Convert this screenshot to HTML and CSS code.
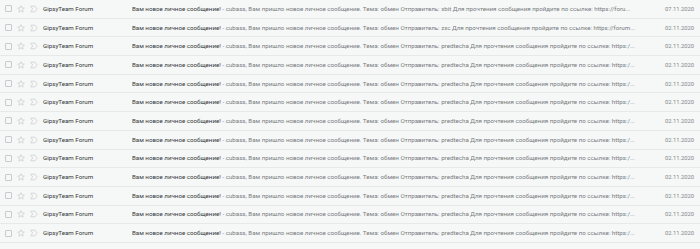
FILE: index.html
```html
<!DOCTYPE html>
<html lang="ru">
<head>
<meta charset="utf-8">
<link rel="stylesheet" href="styles.css">
</head>
<body>
<div class="list">
  <div class="row">
    <span class="icons"><span class="cb"></span><svg class="star" viewBox="0 0 10 10"><path d="M5 .8l1.2 2.8 3 .3-2.3 2 .7 3L5 7.3 2.4 8.9l.7-3-2.3-2 3-.3z"/></svg><svg class="imp" viewBox="0 0 10 10"><path d="M1 1.5h5.2L9 5 6.2 8.5H1L3.3 5z"/></svg></span>
    <span class="from">GipsyTeam Forum</span>
    <span class="text"><span class="subj">Вам новое личное сообщение!</span><span class="snip"> - cubass, Вам пришло новое личное сообщение. Тема: обмен Отправитель: xbit Для прочтения сообщения пройдите по ссылке: https://foru...</span></span>
    <span class="date">07.11.2020</span>
  </div>
  <div class="row">
    <span class="icons"><span class="cb"></span><svg class="star" viewBox="0 0 10 10"><path d="M5 .8l1.2 2.8 3 .3-2.3 2 .7 3L5 7.3 2.4 8.9l.7-3-2.3-2 3-.3z"/></svg><svg class="imp" viewBox="0 0 10 10"><path d="M1 1.5h5.2L9 5 6.2 8.5H1L3.3 5z"/></svg></span>
    <span class="from">GipsyTeam Forum</span>
    <span class="text"><span class="subj">Вам новое личное сообщение!</span><span class="snip"> - cubass, Вам пришло новое личное сообщение. Тема: обмен Отправитель: zxc Для прочтения сообщения пройдите по ссылке: https://forum...</span></span>
    <span class="date">02.11.2020</span>
  </div>
  <div class="row">
    <span class="icons"><span class="cb"></span><svg class="star" viewBox="0 0 10 10"><path d="M5 .8l1.2 2.8 3 .3-2.3 2 .7 3L5 7.3 2.4 8.9l.7-3-2.3-2 3-.3z"/></svg><svg class="imp" viewBox="0 0 10 10"><path d="M1 1.5h5.2L9 5 6.2 8.5H1L3.3 5z"/></svg></span>
    <span class="from">GipsyTeam Forum</span>
    <span class="text"><span class="subj">Вам новое личное сообщение!</span><span class="snip"> - cubass, Вам пришло новое личное сообщение. Тема: обмен Отправитель: predtecha Для прочтения сообщения пройдите по ссылке: https:/...</span></span>
    <span class="date">02.11.2020</span>
  </div>
  <div class="row">
    <span class="icons"><span class="cb"></span><svg class="star" viewBox="0 0 10 10"><path d="M5 .8l1.2 2.8 3 .3-2.3 2 .7 3L5 7.3 2.4 8.9l.7-3-2.3-2 3-.3z"/></svg><svg class="imp" viewBox="0 0 10 10"><path d="M1 1.5h5.2L9 5 6.2 8.5H1L3.3 5z"/></svg></span>
    <span class="from">GipsyTeam Forum</span>
    <span class="text"><span class="subj">Вам новое личное сообщение!</span><span class="snip"> - cubass, Вам пришло новое личное сообщение. Тема: обмен Отправитель: predtecha Для прочтения сообщения пройдите по ссылке: https:/...</span></span>
    <span class="date">02.11.2020</span>
  </div>
  <div class="row">
    <span class="icons"><span class="cb"></span><svg class="star" viewBox="0 0 10 10"><path d="M5 .8l1.2 2.8 3 .3-2.3 2 .7 3L5 7.3 2.4 8.9l.7-3-2.3-2 3-.3z"/></svg><svg class="imp" viewBox="0 0 10 10"><path d="M1 1.5h5.2L9 5 6.2 8.5H1L3.3 5z"/></svg></span>
    <span class="from">GipsyTeam Forum</span>
    <span class="text"><span class="subj">Вам новое личное сообщение!</span><span class="snip"> - cubass, Вам пришло новое личное сообщение. Тема: обмен Отправитель: predtecha Для прочтения сообщения пройдите по ссылке: https:/...</span></span>
    <span class="date">02.11.2020</span>
  </div>
  <div class="row">
    <span class="icons"><span class="cb"></span><svg class="star" viewBox="0 0 10 10"><path d="M5 .8l1.2 2.8 3 .3-2.3 2 .7 3L5 7.3 2.4 8.9l.7-3-2.3-2 3-.3z"/></svg><svg class="imp" viewBox="0 0 10 10"><path d="M1 1.5h5.2L9 5 6.2 8.5H1L3.3 5z"/></svg></span>
    <span class="from">GipsyTeam Forum</span>
    <span class="text"><span class="subj">Вам новое личное сообщение!</span><span class="snip"> - cubass, Вам пришло новое личное сообщение. Тема: обмен Отправитель: predtecha Для прочтения сообщения пройдите по ссылке: https:/...</span></span>
    <span class="date">02.11.2020</span>
  </div>
  <div class="row">
    <span class="icons"><span class="cb"></span><svg class="star" viewBox="0 0 10 10"><path d="M5 .8l1.2 2.8 3 .3-2.3 2 .7 3L5 7.3 2.4 8.9l.7-3-2.3-2 3-.3z"/></svg><svg class="imp" viewBox="0 0 10 10"><path d="M1 1.5h5.2L9 5 6.2 8.5H1L3.3 5z"/></svg></span>
    <span class="from">GipsyTeam Forum</span>
    <span class="text"><span class="subj">Вам новое личное сообщение!</span><span class="snip"> - cubass, Вам пришло новое личное сообщение. Тема: обмен Отправитель: predtecha Для прочтения сообщения пройдите по ссылке: https:/...</span></span>
    <span class="date">02.11.2020</span>
  </div>
  <div class="row">
    <span class="icons"><span class="cb"></span><svg class="star" viewBox="0 0 10 10"><path d="M5 .8l1.2 2.8 3 .3-2.3 2 .7 3L5 7.3 2.4 8.9l.7-3-2.3-2 3-.3z"/></svg><svg class="imp" viewBox="0 0 10 10"><path d="M1 1.5h5.2L9 5 6.2 8.5H1L3.3 5z"/></svg></span>
    <span class="from">GipsyTeam Forum</span>
    <span class="text"><span class="subj">Вам новое личное сообщение!</span><span class="snip"> - cubass, Вам пришло новое личное сообщение. Тема: обмен Отправитель: predtecha Для прочтения сообщения пройдите по ссылке: https:/...</span></span>
    <span class="date">02.11.2020</span>
  </div>
  <div class="row">
    <span class="icons"><span class="cb"></span><svg class="star" viewBox="0 0 10 10"><path d="M5 .8l1.2 2.8 3 .3-2.3 2 .7 3L5 7.3 2.4 8.9l.7-3-2.3-2 3-.3z"/></svg><svg class="imp" viewBox="0 0 10 10"><path d="M1 1.5h5.2L9 5 6.2 8.5H1L3.3 5z"/></svg></span>
    <span class="from">GipsyTeam Forum</span>
    <span class="text"><span class="subj">Вам новое личное сообщение!</span><span class="snip"> - cubass, Вам пришло новое личное сообщение. Тема: обмен Отправитель: predtecha Для прочтения сообщения пройдите по ссылке: https:/...</span></span>
    <span class="date">02.11.2020</span>
  </div>
  <div class="row">
    <span class="icons"><span class="cb"></span><svg class="star" viewBox="0 0 10 10"><path d="M5 .8l1.2 2.8 3 .3-2.3 2 .7 3L5 7.3 2.4 8.9l.7-3-2.3-2 3-.3z"/></svg><svg class="imp" viewBox="0 0 10 10"><path d="M1 1.5h5.2L9 5 6.2 8.5H1L3.3 5z"/></svg></span>
    <span class="from">GipsyTeam Forum</span>
    <span class="text"><span class="subj">Вам новое личное сообщение!</span><span class="snip"> - cubass, Вам пришло новое личное сообщение. Тема: обмен Отправитель: predtecha Для прочтения сообщения пройдите по ссылке: https:/...</span></span>
    <span class="date">02.11.2020</span>
  </div>
  <div class="row">
    <span class="icons"><span class="cb"></span><svg class="star" viewBox="0 0 10 10"><path d="M5 .8l1.2 2.8 3 .3-2.3 2 .7 3L5 7.3 2.4 8.9l.7-3-2.3-2 3-.3z"/></svg><svg class="imp" viewBox="0 0 10 10"><path d="M1 1.5h5.2L9 5 6.2 8.5H1L3.3 5z"/></svg></span>
    <span class="from">GipsyTeam Forum</span>
    <span class="text"><span class="subj">Вам новое личное сообщение!</span><span class="snip"> - cubass, Вам пришло новое личное сообщение. Тема: обмен Отправитель: predtecha Для прочтения сообщения пройдите по ссылке: https:/...</span></span>
    <span class="date">02.11.2020</span>
  </div>
  <div class="row">
    <span class="icons"><span class="cb"></span><svg class="star" viewBox="0 0 10 10"><path d="M5 .8l1.2 2.8 3 .3-2.3 2 .7 3L5 7.3 2.4 8.9l.7-3-2.3-2 3-.3z"/></svg><svg class="imp" viewBox="0 0 10 10"><path d="M1 1.5h5.2L9 5 6.2 8.5H1L3.3 5z"/></svg></span>
    <span class="from">GipsyTeam Forum</span>
    <span class="text"><span class="subj">Вам новое личное сообщение!</span><span class="snip"> - cubass, Вам пришло новое личное сообщение. Тема: обмен Отправитель: predtecha Для прочтения сообщения пройдите по ссылке: https:/...</span></span>
    <span class="date">02.11.2020</span>
  </div>
  <div class="row">
    <span class="icons"><span class="cb"></span><svg class="star" viewBox="0 0 10 10"><path d="M5 .8l1.2 2.8 3 .3-2.3 2 .7 3L5 7.3 2.4 8.9l.7-3-2.3-2 3-.3z"/></svg><svg class="imp" viewBox="0 0 10 10"><path d="M1 1.5h5.2L9 5 6.2 8.5H1L3.3 5z"/></svg></span>
    <span class="from">GipsyTeam Forum</span>
    <span class="text"><span class="subj">Вам новое личное сообщение!</span><span class="snip"> - cubass, Вам пришло новое личное сообщение. Тема: обмен Отправитель: predtecha Для прочтения сообщения пройдите по ссылке: https:/...</span></span>
    <span class="date">02.11.2020</span>
  </div>
</div>
</body>
</html>
```
FILE: styles.css
```css
html, body {
  margin: 0;
  padding: 0;
  background: #f6f7f7;
}
body {
  width: 700px;
  height: 249px;
  overflow: hidden;
  font-family: Roboto, "Liberation Sans", sans-serif;
}
.list {
  display: flex;
  flex-direction: column;
}
.row {
  height: 18.7px;
  box-sizing: border-box;
  border-bottom: 1px solid #e6e8ea;
  display: flex;
  align-items: center;
  background: #f6f7f7;
  font-size: 6.2px;
  white-space: nowrap;
}
.icons {
  display: flex;
  align-items: center;
  width: 43px;
  flex: none;
  padding-left: 5px;
  box-sizing: border-box;
}
.cb {
  width: 7px;
  height: 7px;
  box-sizing: border-box;
  border: 1px solid #c8cbcd;
  border-radius: 1px;
  flex: none;
}
.star {
  width: 8px;
  height: 8px;
  margin-left: 5px;
  fill: none;
  stroke: #c8cbcd;
  stroke-width: 0.9;
  flex: none;
}
.imp {
  width: 8px;
  height: 8px;
  margin-left: 5px;
  fill: none;
  stroke: #c8cbcd;
  stroke-width: 0.9;
  flex: none;
}
.from {
  width: 89px;
  flex: none;
  color: #34373a;
}
.text {
  flex: 1;
  overflow: hidden;
  text-overflow: ellipsis;
  min-width: 0;
}
.subj {
  color: #34373a;
}
.snip {
  color: #777c80;
}
.date {
  width: 60px;
  flex: none;
  text-align: right;
  padding-right: 6px;
  box-sizing: border-box;
  color: #80868b;
  font-size: 5.8px;
}
```
